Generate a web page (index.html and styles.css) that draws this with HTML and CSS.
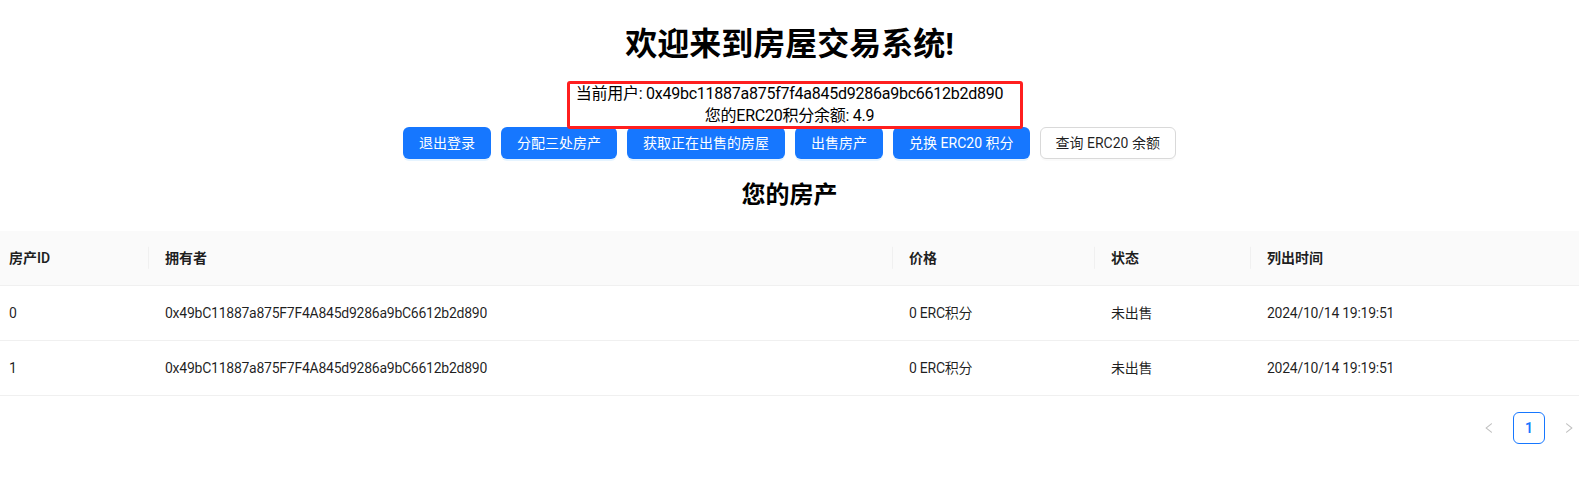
FILE: index.html
```html
<!DOCTYPE html>
<html lang="zh-CN">
<head>
<meta charset="utf-8">
<title>房屋交易系统</title>
<link rel="stylesheet" href="styles.css">
</head>
<body>
<div class="page">
  <h1 class="title">欢迎来到房屋交易系统!</h1>
  <div class="account">
    <div class="account-line">当前用户: 0x49bc11887a875f7f4a845d9286a9bc6612b2d890</div>
    <div class="account-line">您的ERC20积分余额: 4.9</div>
    <span class="annotation"></span>
  </div>
  <div class="actions">
    <button class="btn btn-primary">退出登录</button>
    <button class="btn btn-primary">分配三处房产</button>
    <button class="btn btn-primary">获取正在出售的房屋</button>
    <button class="btn btn-primary">出售房产</button>
    <button class="btn btn-primary">兑换 ERC20 积分</button>
    <button class="btn btn-default">查询 ERC20 余额</button>
  </div>
  <h2 class="section-title">您的房产</h2>
  <div class="table-wrap">
    <table class="table">
      <colgroup>
        <col class="col-id">
        <col class="col-owner">
        <col class="col-price">
        <col class="col-status">
        <col class="col-time">
      </colgroup>
      <thead>
        <tr>
          <th>房产ID</th>
          <th>拥有者</th>
          <th>价格</th>
          <th>状态</th>
          <th>列出时间</th>
        </tr>
      </thead>
      <tbody>
        <tr>
          <td>0</td>
          <td>0x49bC11887a875F7F4A845d9286a9bC6612b2d890</td>
          <td>0 ERC积分</td>
          <td>未出售</td>
          <td>2024/10/14 19:19:51</td>
        </tr>
        <tr>
          <td>1</td>
          <td>0x49bC11887a875F7F4A845d9286a9bC6612b2d890</td>
          <td>0 ERC积分</td>
          <td>未出售</td>
          <td>2024/10/14 19:19:51</td>
        </tr>
      </tbody>
    </table>
    <ul class="pagination">
      <li class="page-arrow disabled">
        <svg viewBox="64 64 896 896" width="12" height="12" fill="currentColor"><path d="M724 218.3V141c0-6.7-7.7-10.4-12.9-6.3L260.3 486.8a31.86 31.86 0 000 50.3l450.8 352.1c5.3 4.1 12.9.4 12.9-6.3v-77.3c0-4.9-2.3-9.6-6.1-12.6l-360-281 360-281.1c3.8-3 6.1-7.7 6.1-12.6z"/></svg>
      </li>
      <li class="page-item active">1</li>
      <li class="page-arrow disabled">
        <svg viewBox="64 64 896 896" width="12" height="12" fill="currentColor"><path d="M765.7 486.8L314.9 134.7A7.97 7.97 0 00302 141v77.3c0 4.9 2.3 9.6 6.1 12.6l360 281.1-360 281.1c-3.8 3-6.1 7.7-6.1 12.6V883c0 6.6 7.6 10.3 12.9 6.3l450.8-352.1a31.960 31.96 0 000-50.4z"/></svg>
      </li>
    </ul>
  </div>
</div>
</body>
</html>
```

FILE: styles.css
```css
* {
  box-sizing: border-box;
}

html, body {
  margin: 0;
  padding: 0;
  background: #ffffff;
}

body {
  font-family: Roboto, "Noto Sans CJK SC", sans-serif;
  color: #000000;
  overflow-x: hidden;
}

.page {
  display: flex;
  flex-direction: column;
  align-items: stretch;
}

.title {
  margin: 24px 0 19px;
  font-size: 32px;
  line-height: 40px;
  font-weight: 700;
  text-align: center;
}

.account {
  position: relative;
  text-align: center;
  font-size: 16px;
  line-height: 22px;
}

.account-line {
  letter-spacing: -0.25px;
}

.annotation {
  position: absolute;
  top: -2px;
  left: calc(50% - 222.5px);
  width: 456px;
  height: 48px;
  border: 3px solid #ff1f1f;
  border-radius: 3px;
  z-index: 2;
  pointer-events: none;
}

.actions {
  display: flex;
  justify-content: center;
  gap: 10px;
}

.btn {
  height: 32px;
  padding: 4px 15px;
  font-family: Roboto, "Noto Sans CJK SC", sans-serif;
  font-size: 14px;
  line-height: 22px;
  border-radius: 6px;
  border: 1px solid transparent;
  cursor: pointer;
  white-space: nowrap;
}

.btn-primary {
  background: #1677ff;
  color: #ffffff;
  box-shadow: 0 2px 0 rgba(5, 145, 255, 0.1);
}

.btn-default {
  background: #ffffff;
  color: rgba(0, 0, 0, 0.88);
  border-color: #d9d9d9;
  box-shadow: 0 2px 0 rgba(0, 0, 0, 0.02);
}

.section-title {
  margin: 20px 0;
  font-size: 24px;
  line-height: 32px;
  font-weight: 700;
  text-align: center;
}

.table-wrap {
  margin: 0 -6px 0 -7px;
}

.table {
  width: 100%;
  border-collapse: separate;
  border-spacing: 0;
  table-layout: fixed;
  font-size: 14px;
  line-height: 22px;
  color: rgba(0, 0, 0, 0.88);
}

.col-id { width: 156px; }
.col-owner { width: 744px; }
.col-price { width: 202px; }
.col-status { width: 156px; }
.col-time { width: 334px; }

.table th,
.table td {
  padding: 16px;
  text-align: left;
  border-bottom: 1px solid #f0f0f0;
}

.table td {
  letter-spacing: -0.25px;
}

.table th {
  position: relative;
  background: #fafafa;
  font-weight: 600;
}

.table th:not(:last-child)::before {
  content: "";
  position: absolute;
  top: 50%;
  right: 0;
  width: 1px;
  height: 1.6em;
  background: #f0f0f0;
  transform: translateY(-50%);
}

.pagination {
  list-style: none;
  margin: 16px 0 0;
  padding: 0;
  display: flex;
  justify-content: flex-end;
  gap: 8px;
  font-size: 14px;
}

.page-arrow,
.page-item {
  min-width: 32px;
  height: 32px;
  display: flex;
  align-items: center;
  justify-content: center;
  border-radius: 6px;
}

.page-arrow.disabled {
  color: rgba(0, 0, 0, 0.25);
}

.page-item.active {
  border: 1px solid #1677ff;
  color: #1677ff;
  font-weight: 600;
  background: #ffffff;
}
```
